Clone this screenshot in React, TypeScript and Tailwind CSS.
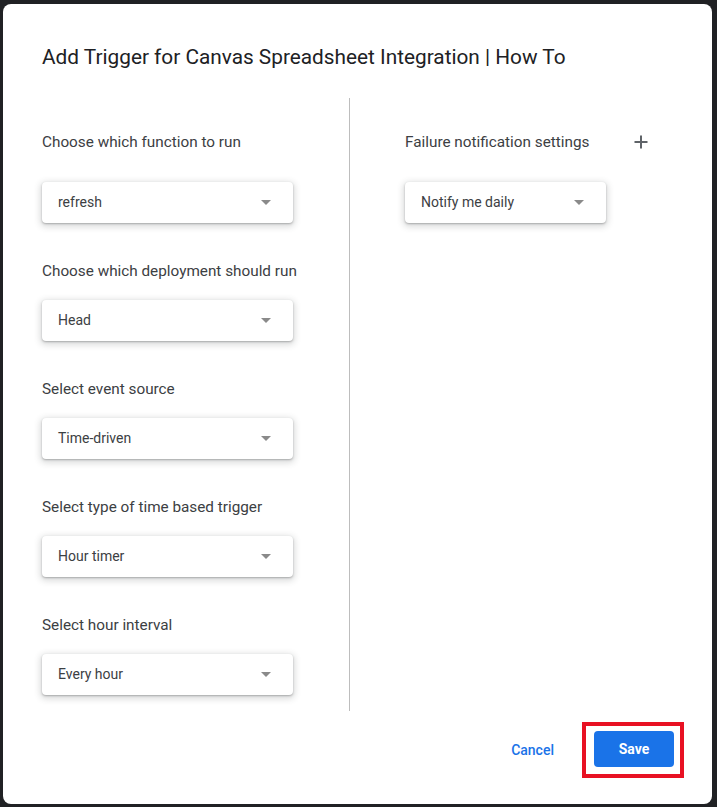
const leftFields = [
  { label: 'Choose which function to run', value: 'refresh' },
  { label: 'Choose which deployment should run', value: 'Head' },
  { label: 'Select event source', value: 'Time-driven' },
  { label: 'Select type of time based trigger', value: 'Hour timer' },
  { label: 'Select hour interval', value: 'Every hour' },
];

const Dropdown = ({ value, width }: { value: string; width: string }) => (
  <div
    className={`${width} h-[41px] flex items-center justify-between pl-4 pr-[22px] bg-white rounded-[4px] shadow-[0_1px_2px_rgba(60,64,67,0.35),0_2px_6px_2px_rgba(60,64,67,0.18)]`}
  >
    <span className="text-[14px] text-[#3c4043]">{value}</span>
    <span className="w-0 h-0 border-x-[5px] border-t-[5px] border-x-transparent border-t-[#8a8a8a]" />
  </div>
);

const App = () => {
  return (
    <div
      className="w-[717px] h-[807px] bg-[#202124] pt-[4px] pl-[3px] pr-[5px] pb-[3px]"
      style={{ fontFamily: 'Roboto, "Liberation Sans", sans-serif' }}
    >
      <div className="w-full h-full bg-white rounded-lg flex flex-col">
        {/* Header */}
        <div className="h-[94px] pl-[39px] pt-[39px]">
          <h1 className="text-[20.8px] leading-[28px] text-[#202124] whitespace-nowrap">
            Add Trigger for Canvas Spreadsheet Integration | How To
          </h1>
        </div>

        {/* Body */}
        <div className="h-[613px] flex pl-[39px]">
          <div className="w-[251px] flex flex-col">
            {leftFields.map((f, i) => (
              <div key={f.label} className={i === 0 ? 'pt-[34px]' : 'pt-[38px]'}>
                <div className="text-[15.3px] leading-[20px] text-[#3c4043] whitespace-nowrap">{f.label}</div>
                <div className={i === 0 ? 'mt-[30px]' : 'mt-[19px]'}>
                  <Dropdown value={f.value} width="w-[251px]" />
                </div>
              </div>
            ))}
          </div>

          <div className="ml-[56px] w-px h-full bg-[#bdbdbd]" />

          <div className="ml-[55px] w-[243px] flex flex-col pt-[34px]">
            <div className="flex items-center justify-between">
              <span className="text-[15.3px] leading-[20px] text-[#3c4043] whitespace-nowrap">Failure notification settings</span>
              <svg width="14" height="14" viewBox="0 0 14 14" className="text-[#5f6368]">
                <path d="M7 0.5v13M0.5 7h13" stroke="currentColor" strokeWidth="2" />
              </svg>
            </div>
            <div className="mt-[30px]">
              <Dropdown value="Notify me daily" width="w-[201px]" />
            </div>
          </div>
        </div>

        {/* Footer */}
        <div className="flex justify-end items-start pt-[11px] pr-[28px]">
          <button className="mt-[18px] mr-[28px] text-[14px] font-medium text-[#1a73e8] leading-[20px]">
            Cancel
          </button>
          <div className="border-[4px] border-[#e81123] pl-[8px] pr-[6px] pt-[5px] pb-[7px]">
            <button className="w-[80px] h-[36px] rounded-[4px] bg-[#1a73e8] text-white text-[14px] font-bold">
              Save
            </button>
          </div>
        </div>
      </div>
    </div>
  );
};

export default App;
